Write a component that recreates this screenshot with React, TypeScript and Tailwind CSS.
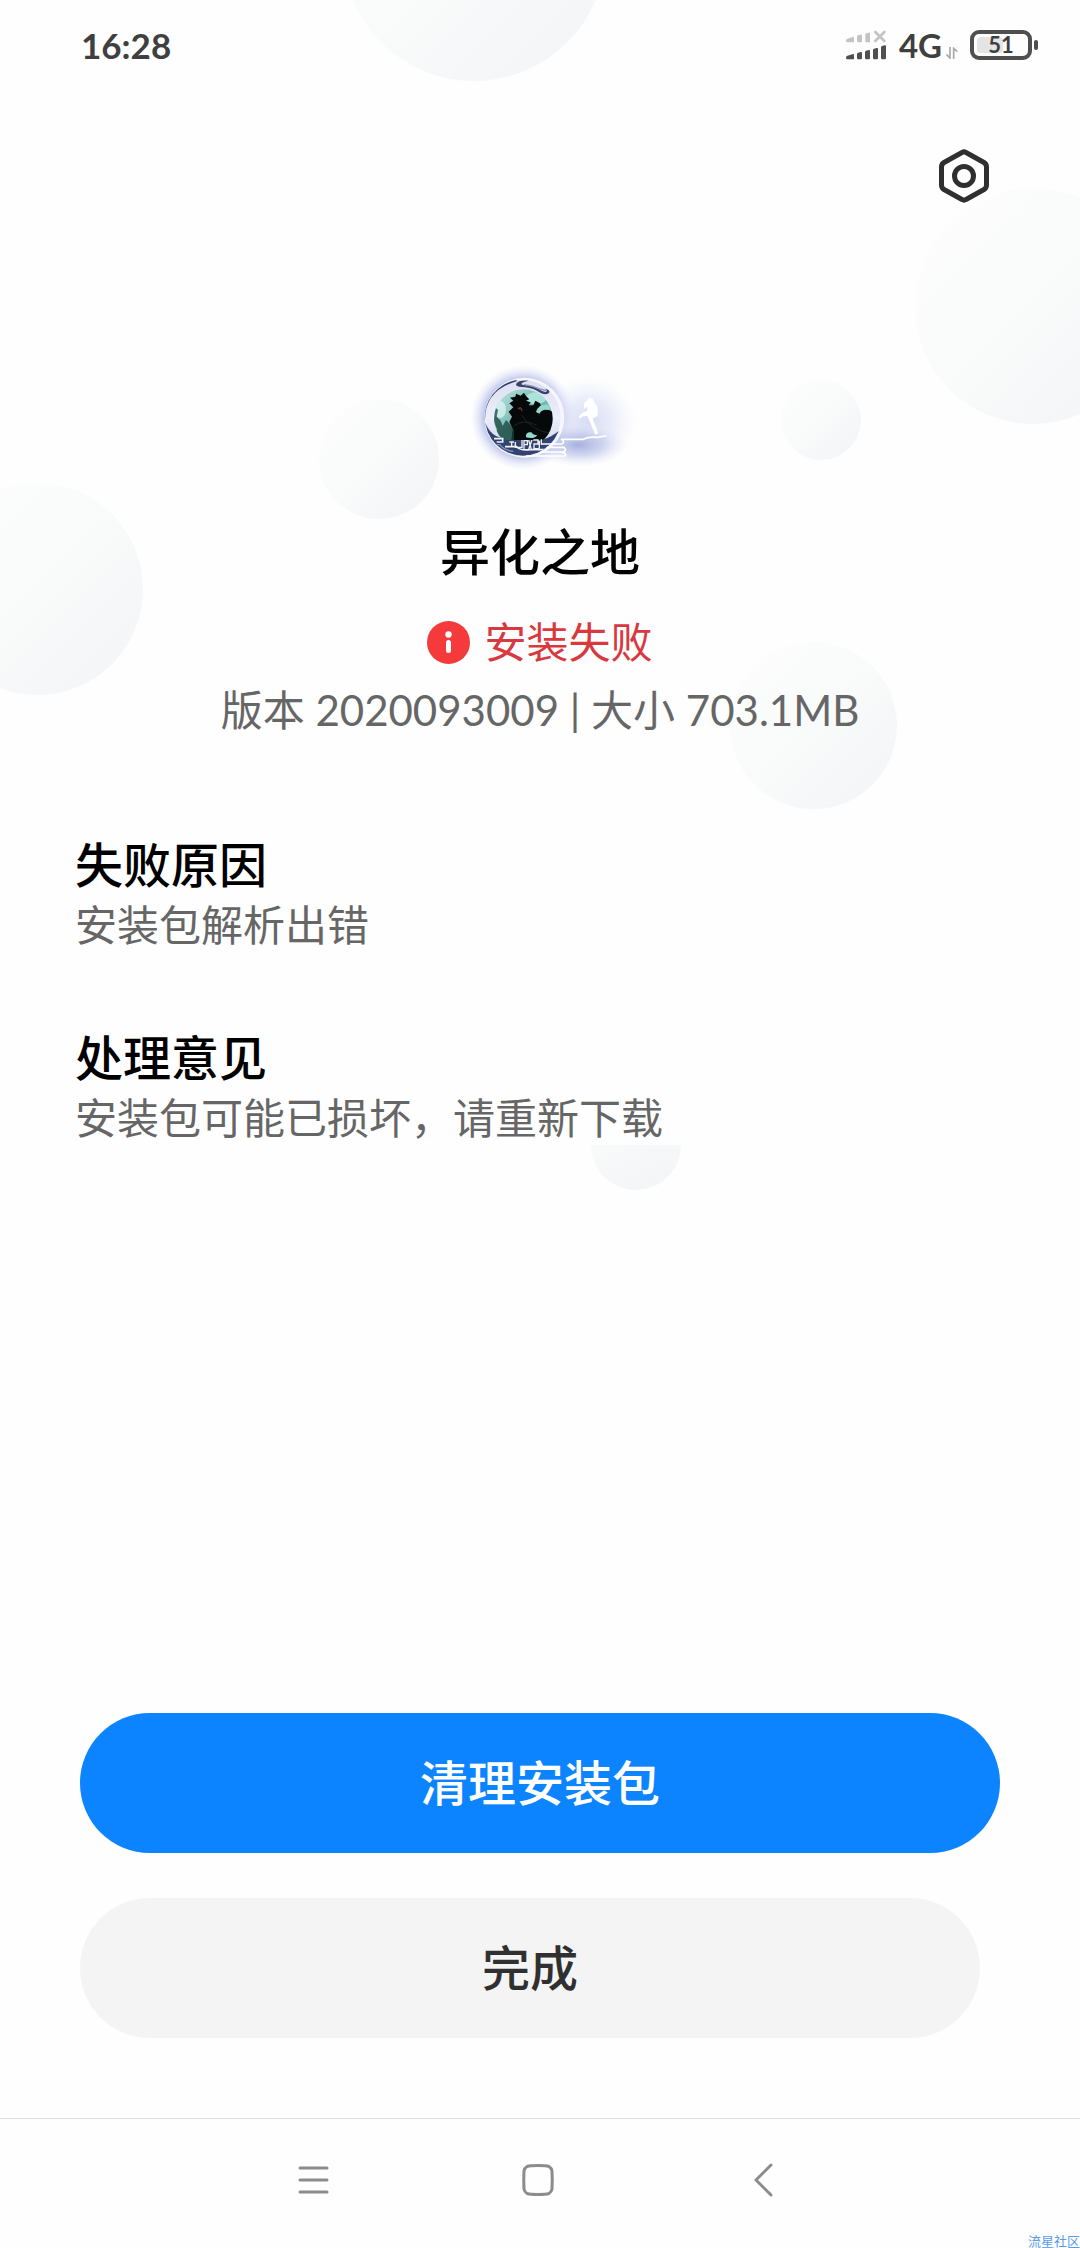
import React from "react";

function Bubbles() {
  const shade = "absolute rounded-full bg-linear-to-br from-[#fefefe] via-[#f9fafa] to-[#f2f4f6]";
  return (
    <div aria-hidden="true" className="pointer-events-none absolute inset-0 overflow-hidden">
      <div className={`${shade} left-[342px] -top-[183px] size-[264px]`} />
      <div className={`${shade} -right-[71px] top-[188px] size-[236px]`} />
      <div className={`${shade} left-[319px] top-[399px] size-[120px]`} />
      <div className={`${shade} left-[781px] top-[380px] size-[80px]`} />
      <div className={`${shade} -left-[69px] top-[483px] size-[212px]`} />
      <div className={`${shade} left-[730px] top-[642px] size-[167px]`} />
      <div className="absolute left-[591px] top-[1145px] h-[45px] w-[90px] rounded-b-full bg-linear-to-br from-[#f9fafa] to-[#f2f4f6]" />
    </div>
  );
}

function SignalIcon() {
  return (
    <svg viewBox="0 0 120 90" className="h-[30px] w-[40px]" role="img" aria-label="信号">
      <g fill="#c4c4c4">
        <path d="M4 26L22 20Q24 20 24 23V37H4Q0 37 0 32Q0 28 4 26Z" />
        <path d="M33 19Q33 17 36 16L44 14Q48 13 48 17V37H37Q33 37 33 33Z" />
        <path d="M58 14Q58 11 61 10L68 8Q72 7 72 11V37H62Q58 37 58 33Z" />
      </g>
      <path d="M88 6L115 33M115 6L88 33" stroke="#c4c4c4" strokeWidth="8" strokeLinecap="round" />
      <g fill="#4f4f4f">
        <path d="M4 77L22 72Q24 72 24 75V88H4Q0 88 0 83Q0 78 4 77Z" />
        <path d="M33 71Q33 69 36 68L44 66Q48 65 48 69V84Q48 88 44 88H37Q33 88 33 84Z" />
        <path d="M57 65Q57 63 60 62L68 60Q72 59 72 63V84Q72 88 68 88H61Q57 88 57 84Z" />
        <path d="M81 59Q81 57 84 56L92 54Q96 53 96 57V84Q96 88 92 88H85Q81 88 81 84Z" />
        <path d="M105 52Q105 49 108 48L116 46Q120 45 120 49V84Q120 88 116 88H109Q105 88 105 84Z" />
      </g>
    </svg>
  );
}

function StatusBar() {
  return (
    <header className="flex h-[90px] items-center justify-between pl-[81px] pr-[42px] text-[#3f3f3f]">
      <time className="text-[35px] font-bold leading-none">16:28</time>
      <div className="flex items-center">
        <SignalIcon />
        <span className="ml-[13px] text-[33px] font-bold leading-none">4G</span>
        <svg viewBox="0 0 36 36" className="ml-1 mt-4 h-3 w-3" aria-hidden="true" fill="none" stroke="#a8a8a8" strokeWidth="5">
          <path d="M12 0V33L1 22" />
          <path d="M23 36V4L34 14" />
        </svg>
        <div className="ml-3 flex items-center">
          <div className="relative flex h-[30px] w-[62px] items-center justify-center rounded-[9px] border-4 border-[#4f4f4f]">
            <div className="absolute left-[3px] top-[3px] h-4 w-[26px] rounded-[4px] bg-[#e4e4e4]" />
            <span className="relative text-[22px] font-bold leading-none">51</span>
          </div>
          <div className="ml-0.5 h-[10px] w-1 rounded-full bg-[#4f4f4f]" />
        </div>
      </div>
    </header>
  );
}

function AppIcon() {
  return (
    <svg viewBox="-36 0 612 390" className="h-[130px] w-[204px]" role="img" aria-label="异化之地">
      <defs>
        <radialGradient id="halo">
          <stop offset="0.75" stopColor="#aab3e4" stopOpacity="0.7" />
          <stop offset="0.88" stopColor="#c8cef0" stopOpacity="0.35" />
          <stop offset="1" stopColor="#dfe3f8" stopOpacity="0" />
        </radialGradient>
        <radialGradient id="mist">
          <stop offset="0" stopColor="#cdd3f1" stopOpacity="0.8" />
          <stop offset="0.5" stopColor="#dce0f6" stopOpacity="0.6" />
          <stop offset="1" stopColor="#eef0fb" stopOpacity="0" />
        </radialGradient>
        <radialGradient id="pool">
          <stop offset="0" stopColor="#8f9cd6" stopOpacity="0.75" />
          <stop offset="0.5" stopColor="#a9b3e0" stopOpacity="0.45" />
          <stop offset="1" stopColor="#dfe3f8" stopOpacity="0" />
        </radialGradient>
        <linearGradient id="sky" x1="0" y1="0" x2="1" y2="1">
          <stop offset="0" stopColor="#c9eeec" />
          <stop offset="0.5" stopColor="#6fb3ab" />
          <stop offset="1" stopColor="#9fdccb" />
        </linearGradient>
        <linearGradient id="ring" x1="0" y1="0" x2="0" y2="1">
          <stop offset="0" stopColor="#dcdff0" />
          <stop offset="0.5" stopColor="#eceefa" />
          <stop offset="1" stopColor="#c9d0ea" />
        </linearGradient>
        <clipPath id="disc"><circle cx="220" cy="206" r="88" /></clipPath>
        <clipPath id="outer"><circle cx="219" cy="203" r="114" /></clipPath>
      </defs>
      <circle cx="219" cy="203" r="158" fill="url(#halo)" />
      <ellipse cx="415" cy="215" rx="145" ry="135" fill="url(#mist)" />
      <ellipse cx="385" cy="285" rx="150" ry="65" fill="url(#pool)" />
      <circle cx="223" cy="203" r="120" fill="#f5f6ff" />
      <circle cx="219" cy="203" r="113" fill="url(#ring)" />
      <path d="M200 90A114 114 0 0 0 105 215Q102 122 200 94Z" fill="#343d70" />
      <g clipPath="url(#disc)">
        <rect x="125" y="110" width="190" height="190" fill="url(#sky)" />
        <ellipse cx="258" cy="145" rx="30" ry="18" fill="#b7eee2" opacity="0.8" />
        <ellipse cx="150" cy="178" rx="18" ry="26" fill="#dff6f6" opacity="0.7" />
        <path d="M176 185L190 172L178 160L190 152L180 143L196 140L198 131L212 137L222 128L228 138L238 148L228 152L242 157L236 166L250 166L256 152L270 160L274 172L296 180L315 188V300H172L184 270L188 236L178 215L186 200Z" fill="#05090a" />
        <path d="M134 170L144 180L140 200L152 212L158 228L168 210L180 222L192 240V300H125V262L142 240L132 215Z" fill="#17413c" opacity="0.75" />
        <path d="M258 186Q266 162 292 164Q306 170 296 180Q276 176 268 191ZM228 262Q226 245 244 247Q250 257 262 254Q254 269 228 262Z" fill="#93d9cb" />
        <path d="M205 178Q212 168 216 182" stroke="#6b3329" strokeWidth="5" fill="none" />
        <path d="M190 228Q220 205 260 226M215 195Q242 240 300 250" stroke="#1d2724" strokeWidth="3" fill="none" />
      </g>
      <g clipPath="url(#outer)">
        <path d="M102 210Q115 246 138 258L170 270H275Q305 262 335 236V325H102Z" fill="#33436f" />
        <path d="M196 276V292H216V270M178 276H192M185 276V290M222 270V298M222 272H232V284H222M236 270L244 298M246 270L236 298M250 270H264V282H252V296H266M268 272V296M274 268V284" fill="none" stroke="#eef0f6" strokeWidth="4" />
        <path d="M132 266H158V276H140M165 290H200Q210 302 240 299H285" fill="none" stroke="#f1f3fb" strokeWidth="5" />
        <path d="M128 284H150Q160 300 190 304" fill="none" stroke="#8290bc" strokeWidth="4" />
      </g>
      <path d="M236 92Q205 90 198 102Q197 112 226 112Q252 115 268 127Q284 137 296 130Q304 120 284 116Q296 123 286 126Q276 124 264 116Q244 106 216 104Q208 98 236 92Z" fill="#39426b" />
      <path d="M222 104Q248 106 270 117L288 122" fill="none" stroke="#8c94b8" strokeWidth="4" />
      <path d="M410 154Q414 140 426 144Q432 148 432 156L440 166Q446 184 442 198L428 206L436 226L445 250L436 254L420 216L412 198Q396 196 389 206L386 200Q396 186 412 183L413 170L402 176V158Z" fill="#fff" />
      <path d="M275 282H335Q348 276 333 268H400Q415 260 440 262L468 258M275 306H340Q352 300 342 292H292M230 318H345Q352 310 335 307" fill="none" stroke="#fff" strokeWidth="5" strokeLinecap="round" />
    </svg>
  );
}

function Section({ title, text }: { title: string; text: string }) {
  return (
    <section>
      <h2 className="text-[48px] font-medium leading-[60px] text-black">{title}</h2>
      <p className="text-[42px] leading-[60px] text-[#666]">{text}</p>
    </section>
  );
}

export default function App() {
  return (
    <div className="relative flex min-h-screen flex-col bg-[#fefefe] font-['Lato','Noto_Sans_CJK_SC',sans-serif]" lang="zh-CN">
      <Bubbles />
      <div className="relative flex flex-1 flex-col">
        <StatusBar />
        <div className="flex justify-end pr-[84px] pt-[54px]">
          <button type="button" aria-label="设置" className="size-16">
            <svg viewBox="0 0 64 64" className="size-16" fill="none" stroke="#2f2f2f" strokeWidth="5" strokeLinejoin="round">
              <path d="M30 8.5Q32 7.200 34 8.500L52 18.500Q54.500 20 54.500 23V41Q54.500 44 52 45.500L34 55.500Q32 56.800 30 55.500L12 45.500Q9.500 44 9.500 41V23Q9.500 20 12 18.500Z" />
              <circle cx="32" cy="32" r="9.500" />
            </svg>
          </button>
        </div>

        <main className="flex flex-1 flex-col">
          <div className="flex flex-col items-center pt-[142px]">
            <AppIcon />
            <h1 className="mt-[42px] text-[50px] font-medium leading-[60px] text-black">异化之地</h1>
            <p role="alert" className="mt-[30px] flex items-center gap-[14px] text-[42px] leading-[60px] text-[#d8393f]">
              <svg viewBox="0 0 43 43" className="size-[43px]" aria-hidden="true">
                <circle cx="21.500" cy="21.500" r="21.500" fill="#f43a3a" />
                <circle cx="21.500" cy="13.500" r="3.200" fill="#fff" />
                <rect x="19" y="19" width="5" height="13" rx="2.500" fill="#fff" />
              </svg>
              安装失败
            </p>
            <p className="mt-2 text-[42px] leading-[60px] text-[#666]">版本 2020093009 | 大小 703.1MB</p>
          </div>

          <div className="mt-[95px] flex flex-col gap-[73px] px-[75px]">
            <Section title="失败原因" text="安装包解析出错" />
            <Section title="处理意见" text="安装包可能已损坏，请重新下载" />
          </div>

          <div className="mt-auto flex flex-col gap-[45px] px-20 pb-20 pt-20 text-[48px] font-medium">
            <button type="button" className="h-[140px] rounded-full bg-[#0d84ff] text-white">清理安装包</button>
            <button type="button" className="mr-5 h-[140px] rounded-full bg-[#f4f4f4] text-[#303030]">完成</button>
          </div>
        </main>

        <nav aria-label="系统导航" className="flex h-[130px] items-center justify-center gap-[177px] border-t border-[#dedede] pb-2 pr-1">
          <button type="button" aria-label="菜单" className="size-12">
            <svg viewBox="0 0 48 48" className="size-12" stroke="#8c8c8c" strokeWidth="3" strokeLinecap="round">
              <path d="M11 12H38M11 24H38M11 36H38" />
            </svg>
          </button>
          <button type="button" aria-label="主屏幕" className="size-12">
            <svg viewBox="0 0 48 48" className="size-12" fill="none" stroke="#8c8c8c" strokeWidth="3">
              <path d="M24 9.500Q32 9.500 35 10.500Q37.500 12 38 15Q38.500 24 38 33Q37.500 36 35 37.500Q32 38.500 24 38.500Q16 38.500 13 37.500Q10.500 36 10 33Q9.500 24 10 15Q10.500 12 13 10.500Q16 9.500 24 9.500Z" />
            </svg>
          </button>
          <button type="button" aria-label="返回" className="size-12">
            <svg viewBox="0 0 48 48" className="size-12" fill="none" stroke="#8c8c8c" strokeWidth="3" strokeLinecap="round" strokeLinejoin="round">
              <path d="M32 9L17 24L32 39" />
            </svg>
          </button>
        </nav>
      </div>
      <span className="absolute bottom-0 right-0 text-[13px] leading-[13px] text-[#5a9be8]">流星社区</span>
    </div>
  );
}
